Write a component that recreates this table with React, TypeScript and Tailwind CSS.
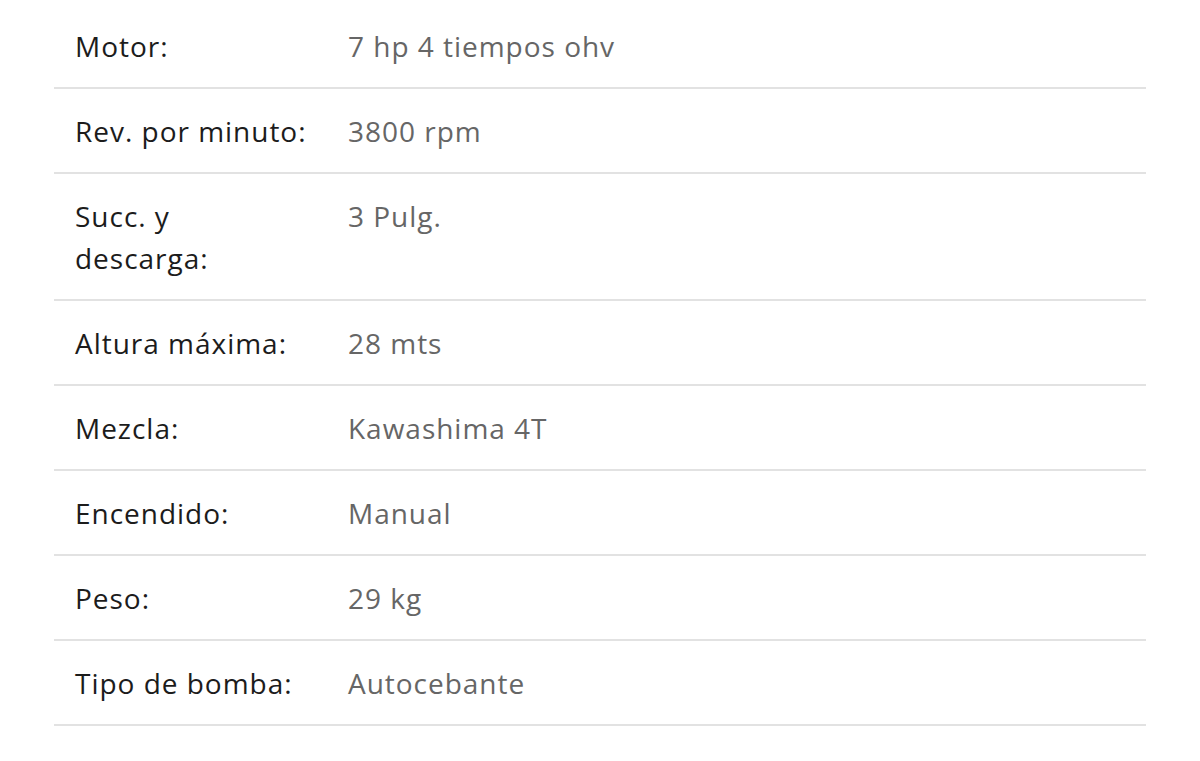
const specs: [string, string][] = [
  ["Motor:", "7 hp 4 tiempos ohv"],
  ["Rev. por minuto:", "3800 rpm"],
  ["Succ. y descarga:", "3 Pulg."],
  ["Altura máxima:", "28 mts"],
  ["Mezcla:", "Kawashima 4T"],
  ["Encendido:", "Manual"],
  ["Peso:", "29 kg"],
  ["Tipo de bomba:", "Autocebante"],
];

export default function App() {
  return (
    <div className="min-h-[761px] bg-white pt-[4px] px-[54px] font-['Open_Sans',sans-serif]">
      <table className="w-full border-collapse table-fixed">
        <tbody>
          {specs.map(([label, value]) => (
            <tr key={label} className="border-b-2 border-[#e2e2e2]">
              <td className="w-1/4 align-top pl-[21px] pr-[18px] pt-[21px] pb-[20px] text-[28px] leading-[42px] tracking-[0.035em] text-[#1c1c1c]">
                {label}
              </td>
              <td className="align-top pl-[21px] pt-[21px] pb-[20px] text-[28px] leading-[42px] tracking-[0.035em] text-[#666666]">
                {value}
              </td>
            </tr>
          ))}
        </tbody>
      </table>
    </div>
  );
}
